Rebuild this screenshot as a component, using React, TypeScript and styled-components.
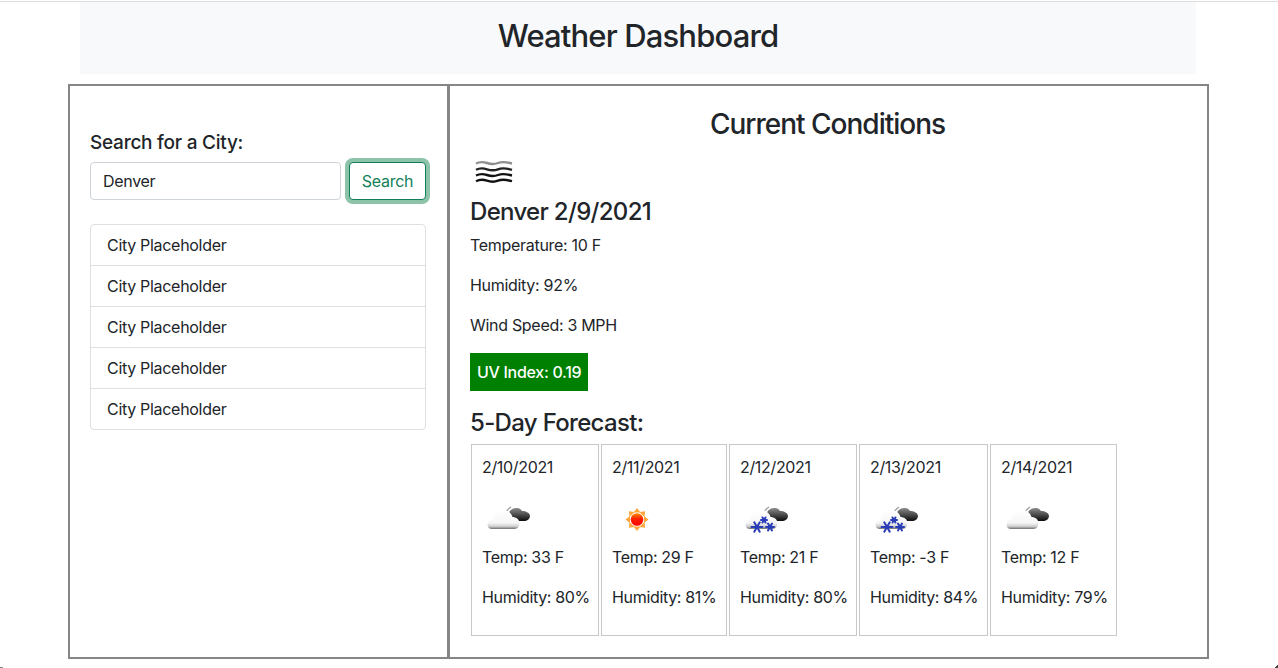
import React from 'react';
import styled, { createGlobalStyle } from 'styled-components';

const GlobalStyle = createGlobalStyle`
  * {
    box-sizing: border-box;
  }
  html, body {
    margin: 0;
    padding: 0;
    height: 100%;
    overflow: hidden;
    background: #fff;
  }
  body {
    font-family: Inter, "Liberation Sans", sans-serif;
    font-size: 16px;
    line-height: 24px;
    letter-spacing: -0.3px;
    color: #212529;
  }
`;

const Page = styled.div`
  width: 1140px;
  margin-left: 68px;
`;

const TopRule = styled.div`
  height: 1px;
  margin-top: 1px;
  background: #dcdcdc;
`;

const Banner = styled.header`
  height: 72px;
  margin: 0 12px 10px;
  padding-bottom: 5px;
  background: #f8f9fa;
  display: flex;
  align-items: center;
  justify-content: center;
`;

const PageTitle = styled.h1`
  margin: 0;
  font-size: 31px;
  line-height: 38px;
  font-weight: 500;
  letter-spacing: -0.85px;
  color: #212529;
`;

const Columns = styled.main`
  display: grid;
  grid-template-columns: 381px 760px;
  height: 575px;
`;

const Panel = styled.section`
  border: 2px solid #868686;
`;

const SearchPanel = styled(Panel)`
  padding: 45px 20px 0;
`;

const SearchLabel = styled.label`
  display: block;
  font-size: 19px;
  line-height: 24px;
  font-weight: 500;
  letter-spacing: -0.25px;
  margin-bottom: 7px;
`;

const SearchRow = styled.div`
  display: flex;
  justify-content: space-between;
  align-items: center;
  width: 336px;
  margin-bottom: 24px;
`;

const CityInput = styled.input`
  width: 251px;
  height: 38px;
  padding: 6px 12px;
  border: 1px solid #ced4da;
  border-radius: 4px;
  font: inherit;
  letter-spacing: inherit;
  color: #212529;
  outline: none;
`;

const SearchButton = styled.button`
  width: 77px;
  height: 38px;
  padding: 0;
  border: 1px solid #0f7f58;
  border-radius: 4px;
  background: #fff;
  color: #12805a;
  font: inherit;
  letter-spacing: inherit;
  box-shadow: 0 0 0 4px rgba(25, 135, 84, 0.5);
`;

const CityList = styled.ul`
  list-style: none;
  width: 336px;
  margin: 0;
  padding: 0;
  border: 1px solid #dfdfdf;
  border-radius: 4px;
`;

const CityRow = styled.li`
  height: 41px;
  padding: 8px 16px;
  border-top: 1px solid #dfdfdf;

  &:first-child {
    height: 40px;
    border-top: 0;
  }
`;

const ConditionsPanel = styled(Panel)`
  margin-left: -1px;
  padding: 21px 20px 0;
`;

const SectionTitle = styled.h2`
  margin: 0 0 6px;
  padding-right: 2px;
  text-align: center;
  font-size: 28px;
  line-height: 34px;
  font-weight: 500;
  letter-spacing: -1px;
`;

const IconSlot = styled.div`
  width: 50px;
  height: 50px;
`;

const SubTitle = styled.h4`
  margin: 0 0 7px;
  font-size: 24px;
  line-height: 29px;
  font-weight: 500;
  letter-spacing: -0.68px;
`;

const Stat = styled.p`
  margin: 0 0 16px;
`;

const UvBadge = styled.div`
  display: block;
  width: fit-content;
  height: 38px;
  padding: 7px;
  margin-bottom: 17px;
  background: #008000;
  color: #fff;
  font-weight: 500;
`;

const ForecastRow = styled.div`
  display: flex;
  gap: 2px;
  margin-left: 1px;
`;

const ForecastCard = styled.article<{ $width: number }>`
  width: ${props => props.$width}px;
  height: 192px;
  padding: 10px;
  border: 1px solid #c8c8c8;
`;

const CardIcon = styled.div`
  width: 50px;
  height: 50px;
`;

const CardLine = styled.p`
  margin: 0 0 16px;
  white-space: nowrap;
  letter-spacing: -0.33px;
`;

// dark window corners that show at the very bottom of the capture
const CornerRight = styled.div`
  position: fixed;
  right: 0;
  bottom: 0;
  width: 4px;
  height: 4px;
  background: linear-gradient(135deg, transparent 50%, #444 50%);
`;

const CornerLeft = styled.div`
  position: fixed;
  left: 0;
  bottom: 0;
  width: 3px;
  height: 1px;
  background: #888;
`;

function MistIcon() {
  const rows = [
    { y: 16, color: '#8f8f8f' },
    { y: 22.3, color: '#222' },
    { y: 28, color: '#111' },
    { y: 33.7, color: '#111' },
  ];
  return (
    <svg width="50" height="50" viewBox="0 0 50 50">
      <g fill="none" strokeWidth="2.4">
        {rows.map(row => (
          <path
            key={row.y}
            d={`M6 ${row.y + 0.5}Q11 ${row.y - 2} 17 ${row.y}T28 ${row.y}T42 ${row.y + 0.5}`}
            stroke={row.color}
          />
        ))}
      </g>
    </svg>
  );
}

function CloudShapes({ id }: { id: string }) {
  return (
    <>
      <defs>
        <linearGradient id={`${id}-white`} x1="0" y1="0" x2="0" y2="1">
          <stop offset="0" stopColor="#ffffff" />
          <stop offset="0.68" stopColor="#f6f6f6" />
          <stop offset="0.86" stopColor="#d0d0d0" />
          <stop offset="1" stopColor="#707070" />
        </linearGradient>
        <linearGradient id={`${id}-dark`} x1="0" y1="0" x2="0" y2="1">
          <stop offset="0" stopColor="#8c8c8c" />
          <stop offset="0.55" stopColor="#474747" />
          <stop offset="1" stopColor="#0d0d0d" />
        </linearGradient>
      </defs>
      <path d="M23 19c1-3 3-5 6-7" fill="none" stroke="#9a9a9a" strokeWidth="1.2" />
      <path
        d="M26 20c1-4 4-7 8-7 3 0 5 1 6 3 4 0 8 2 8 5 0 3-3 5-6 5H30c-3 0-5-3-4-6z"
        fill={`url(#${id}-dark)`}
      />
      <path
        d="M10 34c-3 0-4.500-2-4.500-4.500s2-4.500 5-4.500c.5-5 5-10 11-10 4 0 8 3 9 7 3 0 7 2 7 6 0 3-2 6-5 6z"
        fill={`url(#${id}-white)`}
      />
    </>
  );
}

function CloudIcon({ id }: { id: string }) {
  return (
    <svg width="50" height="50" viewBox="0 0 50 50">
      <CloudShapes id={id} />
    </svg>
  );
}

function Flake({ x, y, r }: { x: number; y: number; r: number }) {
  return (
    <g stroke="#2a3cb8" strokeWidth="2" strokeLinecap="round">
      <path d={`M${x - r} ${y}H${x + r}`} />
      <path d={`M${x - r / 2} ${y - r * 0.85}L${x + r / 2} ${y + r * 0.85}`} />
      <path d={`M${x + r / 2} ${y - r * 0.85}L${x - r / 2} ${y + r * 0.85}`} />
    </g>
  );
}

function SnowIcon({ id }: { id: string }) {
  return (
    <svg width="50" height="50" viewBox="0 0 50 50">
      <CloudShapes id={id} />
      <Flake x={17} y={32} r={5.5} />
      <Flake x={24} y={25} r={3} />
      <Flake x={30} y={32} r={4} />
    </svg>
  );
}

function SunIcon() {
  const rays = [0, 45, 90, 135, 180, 225, 270, 315];
  return (
    <svg width="50" height="50" viewBox="0 0 50 50">
      <defs>
        <linearGradient id="sun-core" x1="0" y1="0" x2="0" y2="1">
          <stop offset="0" stopColor="#ff8a00" />
          <stop offset="0.45" stopColor="#ff2000" />
          <stop offset="1" stopColor="#ff0000" />
        </linearGradient>
      </defs>
      {rays.map(angle => (
        <path
          key={angle}
          d="M21.500 17.500 L25 13 L28.500 17.500 Z"
          fill="#ffa53a"
          transform={`rotate(${angle} 25 24.500)`}
        />
      ))}
      <circle cx="25" cy="24.500" r="6.300" fill="url(#sun-core)" />
    </svg>
  );
}

const cities = Array.from({ length: 5 }, () => 'City Placeholder');

const forecast = [
  { date: '2/10/2021', temp: '33 F', humidity: '80%', width: 128, icon: <CloudIcon id="c1" /> },
  { date: '2/11/2021', temp: '29 F', humidity: '81%', width: 126, icon: <SunIcon /> },
  { date: '2/12/2021', temp: '21 F', humidity: '80%', width: 128, icon: <SnowIcon id="s1" /> },
  { date: '2/13/2021', temp: '-3 F', humidity: '84%', width: 129, icon: <SnowIcon id="s2" /> },
  { date: '2/14/2021', temp: '12 F', humidity: '79%', width: 127, icon: <CloudIcon id="c2" /> },
];

const App: React.FC = () => {
  return (
    <>
      <GlobalStyle />
      <TopRule />
      <Page>
        <Banner>
          <PageTitle>Weather Dashboard</PageTitle>
        </Banner>
        <Columns>
          <SearchPanel>
            <SearchLabel htmlFor="city">Search for a City:</SearchLabel>
            <SearchRow>
              <CityInput id="city" defaultValue="Denver" />
              <SearchButton>Search</SearchButton>
            </SearchRow>
            <CityList>
              {cities.map((city, index) => (
                <CityRow key={index}>{city}</CityRow>
              ))}
            </CityList>
          </SearchPanel>
          <ConditionsPanel>
            <SectionTitle>Current Conditions</SectionTitle>
            <IconSlot>
              <MistIcon />
            </IconSlot>
            <SubTitle>Denver 2/9/2021</SubTitle>
            <Stat>Temperature: 10 F</Stat>
            <Stat>Humidity: 92%</Stat>
            <Stat>Wind Speed: 3 MPH</Stat>
            <UvBadge>UV Index: 0.19</UvBadge>
            <SubTitle>5-Day Forecast:</SubTitle>
            <ForecastRow>
              {forecast.map(day => (
                <ForecastCard key={day.date} $width={day.width}>
                  <CardLine>{day.date}</CardLine>
                  <CardIcon>{day.icon}</CardIcon>
                  <CardLine>Temp: {day.temp}</CardLine>
                  <CardLine>Humidity: {day.humidity}</CardLine>
                </ForecastCard>
              ))}
            </ForecastRow>
          </ConditionsPanel>
        </Columns>
      </Page>
      <CornerLeft />
      <CornerRight />
    </>
  );
};

export default App;
